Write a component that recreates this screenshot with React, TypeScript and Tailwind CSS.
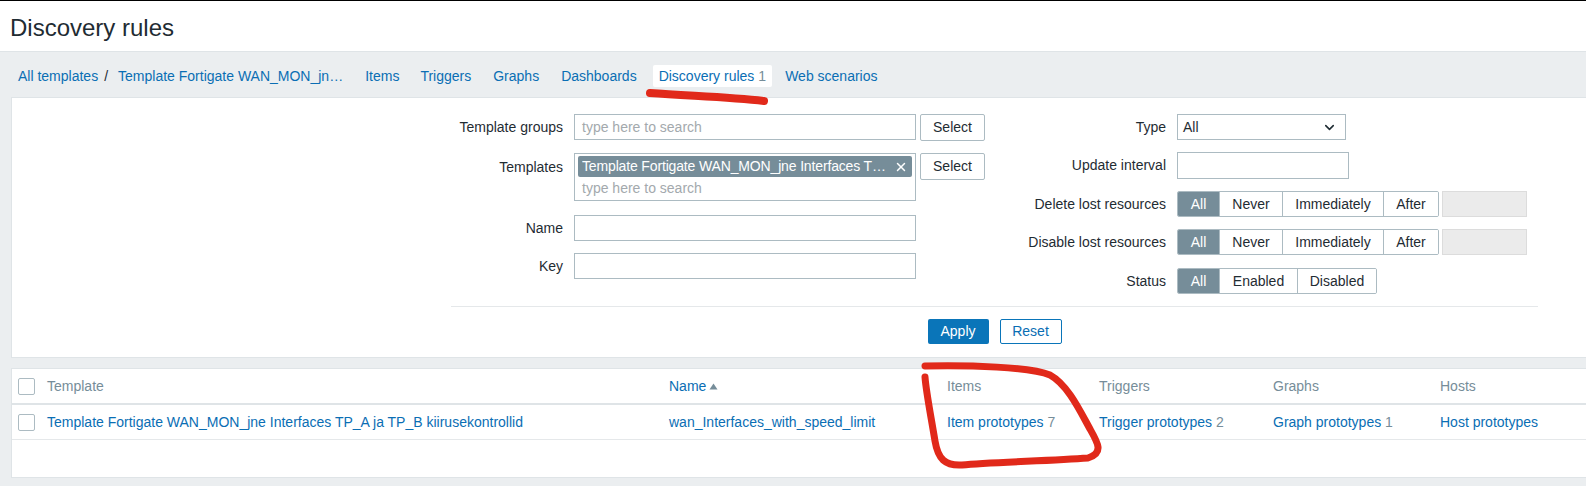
import { ChevronDown, X } from "lucide-react";

const link = "text-[#0a6eb4]";

function NavLinks() {
  return (
    <div className="flex items-center h-[45px] pt-[3px] pl-[18px] text-[14px]">
      <span className={link}>All templates</span>
      <span className="mx-[6px] text-[#1f2c33]">/</span>
      <span className={`${link} ml-[4px]`}>Template Fortigate WAN_MON_jn…</span>
      <span className={`${link} ml-[22px]`}>Items</span>
      <span className={`${link} ml-[21px]`}>Triggers</span>
      <span className={`${link} ml-[22px]`}>Graphs</span>
      <span className={`${link} ml-[22px]`}>Dashboards</span>
      <span className="ml-[16px] bg-white rounded-[2px] h-[22px] px-[6px] flex items-center">
        <span className={link}>Discovery rules</span>
        <span className="text-[#768d99] ml-[4px]">1</span>
      </span>
      <span className={`${link} ml-[13px]`}>Web scenarios</span>
    </div>
  );
}

function Label({ children, w }: { children: React.ReactNode; w: string }) {
  return (
    <div className={`${w} shrink-0 text-right pr-[11px] leading-[26px] text-[14px] text-[#1f2c33]`}>
      {children}
    </div>
  );
}

function TextInput({ w, placeholder, h = "h-[26px]" }: { w: string; placeholder?: string; h?: string }) {
  return (
    <div className={`${w} ${h} border border-[#acbbc2] bg-white px-[7px] flex items-center text-[14px] text-[#a3a9ad]`}>
      {placeholder}
    </div>
  );
}

function SelectBtn() {
  return (
    <div className="ml-[4px] w-[65px] h-[27px] border border-[#acbbc2] rounded-[2px] bg-white flex items-center justify-center text-[14px] text-[#1f2c33]">
      Select
    </div>
  );
}

function Segmented({ items }: { items: [string, string][] }) {
  return (
    <div className="flex h-[26px] border border-[#acbbc2] rounded-[2px] text-[14px] overflow-hidden">
      {items.map(([label, w], i) => (
        <div
          key={label}
          className={`${w} flex items-center justify-center ${
            i === 0 ? "bg-[#768d99] text-white" : "bg-white text-[#1f2c33] border-l border-[#acbbc2]"
          }`}
        >
          {label}
        </div>
      ))}
    </div>
  );
}

const lostItems: [string, string][] = [
  ["All", "w-[41px]"],
  ["Never", "w-[63px]"],
  ["Immediately", "w-[101px]"],
  ["After", "w-[55px]"],
];

function FilterPanel() {
  return (
    <div className="ml-[11px] bg-white border-y border-l border-[#dfe4e7] h-[261px] pt-[16px]">
      <div className="flex">
        {/* left column */}
        <div className="flex flex-col">
          <div className="flex items-start mb-[12px]">
            <Label w="w-[562px]">Template groups</Label>
            <TextInput w="w-[342px]" placeholder="type here to search" />
            <SelectBtn />
          </div>
          <div className="flex items-start mb-[14px]">
            <Label w="w-[562px]">
              <span className="inline-block pt-[1px]">Templates</span>
            </Label>
            <div className="w-[342px] h-[48px] border border-[#acbbc2] bg-white px-[3px] pt-[2px]">
              <div className="h-[21px] bg-[#768d99] rounded-[2px] text-white text-[14px] flex items-center pl-[4px] pr-[4px] gap-[3px]">
                <span className="flex-1 min-w-0 whitespace-nowrap overflow-hidden tracking-[-0.15px]">
                  Template Fortigate WAN_MON_jne Interfaces T…
                </span>
                <X size={14} strokeWidth={2.5} className="shrink-0" />
              </div>
              <div className="text-[14px] text-[#a3a9ad] pl-[4px] leading-[22px]">type here to search</div>
            </div>
            <SelectBtn />
          </div>
          <div className="flex items-start mb-[12px]">
            <Label w="w-[562px]">Name</Label>
            <TextInput w="w-[342px]" />
          </div>
          <div className="flex items-start">
            <Label w="w-[562px]">Key</Label>
            <TextInput w="w-[342px]" />
          </div>
        </div>

        {/* right column */}
        <div className="flex flex-col">
          <div className="flex items-start mb-[12px]">
            <Label w="w-[192px]">Type</Label>
            <div className="w-[169px] h-[26px] border border-[#acbbc2] bg-white pl-[5px] pr-[8px] flex items-center justify-between text-[14px] text-[#1f2c33]">
              <span>All</span>
              <ChevronDown size={15} strokeWidth={2.5} />
            </div>
          </div>
          <div className="flex items-start mb-[12px]">
            <Label w="w-[192px]">Update interval</Label>
            <TextInput w="w-[172px]" h="h-[27px]" />
          </div>
          <div className="flex items-start mb-[12px]">
            <Label w="w-[192px]">Delete lost resources</Label>
            <Segmented items={lostItems} />
            <div className="ml-[3px] w-[85px] h-[26px] bg-[#ebebeb] border border-[#dcdcdc]" />
          </div>
          <div className="flex items-start mb-[13px]">
            <Label w="w-[192px]">Disable lost resources</Label>
            <Segmented items={lostItems} />
            <div className="ml-[3px] w-[85px] h-[26px] bg-[#ebebeb] border border-[#dcdcdc]" />
          </div>
          <div className="flex items-start">
            <Label w="w-[192px]">Status</Label>
            <Segmented
              items={[
                ["All", "w-[41px]"],
                ["Enabled", "w-[78px]"],
                ["Disabled", "w-[79px]"],
              ]}
            />
          </div>
        </div>
      </div>

      <div className="ml-[439px] w-[1087px] mt-[12px] border-t border-[#e5e8ea] pt-[12px] flex justify-center gap-[11px]">
        <div className="w-[61px] h-[25px] bg-[#0a75b9] rounded-[2px] text-white text-[14px] flex items-center justify-center">
          Apply
        </div>
        <div className="w-[62px] h-[25px] border border-[#0a75b9] rounded-[2px] text-[#0a6eb4] text-[14px] flex items-center justify-center">
          Reset
        </div>
      </div>
    </div>
  );
}

function Checkbox() {
  return <div className="w-[17px] h-[17px] border border-[#acbbc2] rounded-[2px] bg-white" />;
}

const cols = ["w-[622px]", "w-[278px]", "w-[152px]", "w-[174px]", "w-[167px]", "flex-1"];

function Table() {
  return (
    <div className="ml-[11px] mt-[10px] bg-white border-y border-l border-[#dfe4e7] h-[110px] text-[14px]">
      <div className="flex items-center h-[36px] border-b-2 border-[#dfe4e7] text-[#768d99]">
        <div className="w-[35px] pl-[6px]">
          <Checkbox />
        </div>
        <div className={cols[0]}>Template</div>
        <div className={`${cols[1]} ${link} flex items-center`}>
          Name
          <svg width="9" height="7" viewBox="0 0 9 7" className="ml-[3px]">
            <path d="M0.5 6.5 L4.5 0.5 L8.5 6.5 Z" fill="#768d99" />
          </svg>
        </div>
        <div className={cols[2]}>Items</div>
        <div className={cols[3]}>Triggers</div>
        <div className={cols[4]}>Graphs</div>
        <div className={cols[5]}>Hosts</div>
      </div>
      <div className="flex items-center h-[35px] border-b border-[#e5e8ea]">
        <div className="w-[35px] pl-[6px]">
          <Checkbox />
        </div>
        <div className={`${cols[0]} ${link}`}>
          Template Fortigate WAN_MON_jne Interfaces TP_A ja TP_B kiirusekontrollid
        </div>
        <div className={`${cols[1]} ${link}`}>wan_Interfaces_with_speed_limit</div>
        <div className={cols[2]}>
          <span className={link}>Item prototypes</span> <span className="text-[#768d99]">7</span>
        </div>
        <div className={cols[3]}>
          <span className={link}>Trigger prototypes</span> <span className="text-[#768d99]">2</span>
        </div>
        <div className={cols[4]}>
          <span className={link}>Graph prototypes</span> <span className="text-[#768d99]">1</span>
        </div>
        <div className={`${cols[5]} ${link}`}>Host prototypes</div>
      </div>
    </div>
  );
}

export default function App() {
  return (
    <div className="relative w-[1586px] h-[486px] overflow-hidden bg-[#ebeef0] font-['Liberation_Sans',Arial,sans-serif] border-t border-black">
      <div className="h-[51px] bg-white border-b border-[#dfe4e7] flex items-center pl-[10px] pt-[3px]">
        <h1 className="text-[24px] text-[#1f2c33]">Discovery rules</h1>
      </div>
      <NavLinks />
      <FilterPanel />
      <Table />

      {/* red marker annotations */}
      <svg
        className="absolute top-0 left-0 pointer-events-none"
        width="1586"
        height="486"
        viewBox="0 0 1586 486"
      >
        <path
          d="M650 92 C 690 95, 730 96, 764 100"
          stroke="#e1291a"
          strokeWidth="8"
          fill="none"
          strokeLinecap="round"
        />
        <path
          d="M925 365 C 970 364, 1030 366, 1050 374 C 1068 384, 1080 410, 1090 428 C 1098 442, 1104 452, 1088 457 C 1050 460, 990 461, 962 464 C 945 465, 938 458, 935 440 C 930 410, 926 390, 925 376"
          stroke="#e1291a"
          strokeWidth="7"
          fill="none"
          strokeLinecap="round"
          strokeLinejoin="round"
        />
      </svg>
    </div>
  );
}
